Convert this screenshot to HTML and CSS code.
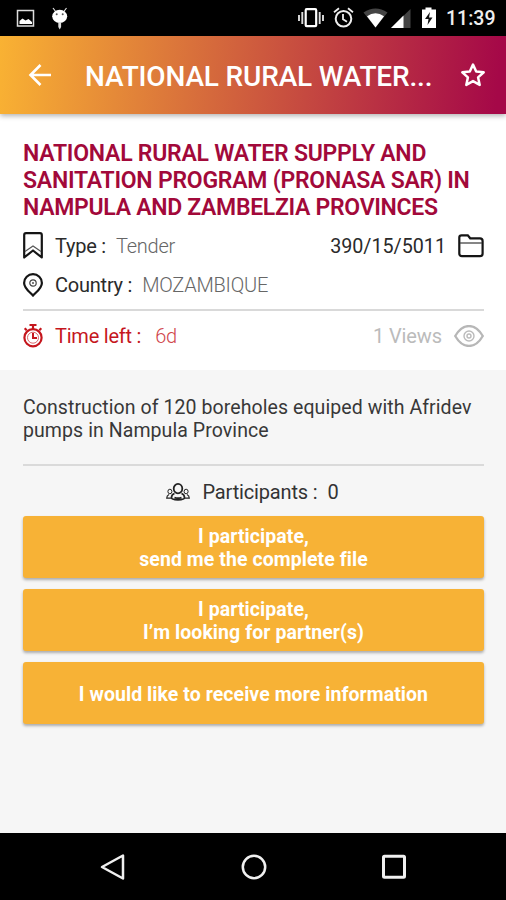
FILE: index.html
```html
<!DOCTYPE html>
<html lang="en">
<head>
<meta charset="utf-8">
<title>National Rural Water Supply</title>
<link rel="stylesheet" href="styles.css">
</head>
<body>
<div class="screen">
  <div class="status">
    <svg class="status-left" width="80" height="36" viewBox="0 0 80 36">
      <path d="M17.5 10.5h16v15.500h-16z" fill="none" stroke="#ddd" stroke-width="1.500"/>
      <path d="M19.500 24v-3l3-2.500 3 2 3-1.500 3.500 3v2z" fill="#fff"/>
      <path d="M53 8l3 4M66.500 8l-3 4" stroke="#ddd" stroke-width="1.200"/>
      <ellipse cx="59.700" cy="16.300" rx="7.500" ry="6.600" fill="#fff"/>
      <path d="M58.300 22h2.800v5l-1.400 2.500-1.400-2.500z" fill="#ddd"/>
      <circle cx="56.700" cy="14.300" r="1" fill="#555"/><circle cx="62.700" cy="14.300" r="1" fill="#555"/>
    </svg>
    <svg class="status-right" width="150" height="36" viewBox="294 0 150 36">
      <rect x="305.700" y="9.200" width="10.500" height="17" rx="1" fill="none" stroke="#fff" stroke-width="2.200"/>
      <path d="M302.300 12v12M319.700 12v12" stroke="#ddd" stroke-width="1.900"/>
      <path d="M299 15v6M323 15v6" stroke="#ddd" stroke-width="1.900"/>
      <circle cx="343.500" cy="18.700" r="7.800" fill="none" stroke="#eee" stroke-width="2"/>
      <path d="M343 14v5.200l4 2.500M334 12.300l5-4M353 12.300l-5-4" fill="none" stroke="#eee" stroke-width="1.800"/>
      <path d="M363.500 12.500q12-8 24 0L375.500 27.500z" fill="#444"/>
      <path d="M367 16.300q8.500-6 17 0L375.500 27.500z" fill="#fff"/>
      <path d="M391 28l19.500-19v19z" fill="#444"/>
      <path d="M391 28l12.500-12.500V28z" fill="#fff"/>
      <path d="M422 9.500h3.500v-2h6v2h4.500v18.500h-14z" fill="#fff"/>
      <path d="M430 12l-5 7h3.500l-1 6 5-7.500h-3.500z" fill="#111"/>
    </svg>
    <span class="clock">11:39</span>
  </div>

  <header class="appbar">
    <svg class="back" width="26" height="26" viewBox="0 0 26 26"><path d="M24 13H4M13.500 3L3.500 13l10 10" fill="none" stroke="#fff" stroke-width="2.600"/></svg>
    <h1 class="appbar-title">NATIONAL RURAL WATER...</h1>
    <svg class="star" width="26" height="26" viewBox="0 0 26 26"><path d="M13 2.600l3.200 6.900 7.500.800-5.600 5.100 1.600 7.500L13 19.100l-6.700 3.800 1.600-7.500-5.600-5.100 7.500-.800z" fill="none" stroke="#fff" stroke-width="2.500" stroke-linejoin="round"/></svg>
  </header>

  <section class="summary">
    <h2 class="title"><span>NATIONAL RURAL WATER SUPPLY AND</span><br><span>SANITATION PROGRAM (PRONASA SAR) IN</span><br><span class="t3">NAMPULA AND ZAMBELZIA PROVINCES</span></h2>
    <div class="row row-type">
      <svg class="ico" width="20" height="28" viewBox="0 0 20 28"><path d="M1.200 25.500V3Q1.200 1.200 3 1.200h14Q18.800 1.200 18.800 3v22.500L10 18.500z" fill="none" stroke="#151515" stroke-width="2.200" stroke-linejoin="round"/><path d="M2 19.500l8-5.500 8 5.500" fill="none" stroke="#555" stroke-width="1.200"/></svg>
      <span class="label">Type :</span><span class="value">Tender</span>
      <span class="ref">390/15/5011</span>
      <svg class="folder" width="26" height="24" viewBox="0 0 26 24"><path d="M1.300 19.500V3.500Q1.300 1.300 3.500 1.300h6.300l2.400 3h9.800q2.600 0 2.600 2.600v12.600q0 2.600-2.600 2.600H4q-2.700 0-2.700-2.600z" fill="none" stroke="#151515" stroke-width="2.200"/><path d="M2 9h22" stroke="#444" stroke-width="1.300"/></svg>
    </div>
    <div class="row row-country">
      <svg class="ico" width="20" height="24" viewBox="0 0 20 24"><path d="M10 22.500C7.500 19.500 1.100 15.500 1.100 9.900a8.900 8.700 0 0 1 17.800 0C18.900 15.500 12.500 19.500 10 22.500z" fill="none" stroke="#151515" stroke-width="2.200"/><circle cx="10" cy="10" r="3.200" fill="none" stroke="#444" stroke-width="1.200"/><circle cx="10" cy="10" r="1" fill="#555"/></svg>
      <span class="label">Country :</span><span class="value">MOZAMBIQUE</span>
    </div>
    <div class="row row-time">
      <svg class="ico" width="20" height="24" viewBox="0 0 20 24"><path d="M6.500 1h7M10 1v4M16.300 6.300l2-2M3.700 6.300l-2-2" stroke="#c5161d" stroke-width="2.200"/><circle cx="10" cy="13.700" r="8.600" fill="none" stroke="#c5161d" stroke-width="2.200"/><circle cx="10" cy="13.700" r="5.500" fill="none" stroke="#d9686c" stroke-width="1"/><path d="M10 9v5h4" fill="none" stroke="#c5161d" stroke-width="2"/></svg>
      <span class="label">Time left :</span><span class="value v-time">6d</span>
      <span class="views">1 Views</span>
      <svg class="eye" width="30" height="22" viewBox="0 0 30 22"><path d="M1.200 11C9-2.300 21-2.300 28.800 11C21 24.300 9 24.300 1.200 11z" fill="none" stroke="#b7b7b7" stroke-width="2.300"/><circle cx="15" cy="11" r="5" fill="none" stroke="#bbb" stroke-width="1.400"/><circle cx="15" cy="11" r="2" fill="none" stroke="#bbb" stroke-width="1.400"/></svg>
    </div>
  </section>

  <main class="detail">
    <p class="desc"><span>Construction of 120 boreholes equiped with Afridev</span><br><span>pumps in Nampula Province</span></p>
    <div class="participants">
      <svg width="24" height="18" viewBox="0 0 24 18" fill="none" stroke="#222"><ellipse cx="12" cy="5.600" rx="4.300" ry="4.700" stroke-width="1.800"/><path d="M8.500 10.500Q5.500 11.500 5.500 14.500q0 2.300 6.500 2.300t6.500-2.300q0-3-3-4M8.500 14.500q3.500 1.200 7 0" stroke-width="1.700"/><ellipse cx="3.900" cy="8.500" rx="2" ry="2.300" stroke-width="1"/><ellipse cx="20.100" cy="8.500" rx="2" ry="2.300" stroke-width="1"/><path d="M3 11.500q-2.300 1-2.300 3.700H5M21 11.500q2.300 1 2.300 3.700H19" stroke-width="1.200"/></svg>
      <span class="p-label">Participants :</span><span class="p-count">0</span>
    </div>
    <div class="actions">
      <button class="btn"><span>I participate,</span><span>send me the complete file</span></button>
      <button class="btn"><span>I participate,</span><span>I’m looking for partner(s)</span></button>
      <button class="btn"><span>I would like to receive more information</span></button>
    </div>
  </main>

  <nav class="navbar">
    <svg width="28" height="28" viewBox="0 0 28 28"><path d="M24 2.500v23L3 14z" fill="none" stroke="#f0f0f0" stroke-width="2.500" stroke-linejoin="round"/></svg>
    <svg width="28" height="28" viewBox="0 0 28 28"><circle cx="14" cy="14" r="11.200" fill="none" stroke="#f0f0f0" stroke-width="2.500"/></svg>
    <svg width="28" height="28" viewBox="0 0 28 28"><rect x="3.500" y="3.200" width="21" height="21" rx="1" fill="none" stroke="#f0f0f0" stroke-width="3"/></svg>
  </nav>
</div>
</body>
</html>
```
FILE: styles.css
```css
* { box-sizing: border-box; margin: 0; padding: 0; }
body { font-family: Roboto, "Liberation Sans", sans-serif; background: #f6f6f6; }
svg { display: block; flex: none; }
span { white-space: nowrap; }
.screen { width: 506px; height: 900px; display: flex; flex-direction: column; overflow: hidden; }

.status { height: 36px; flex: none; background: #000; display: flex; }
.status-right { margin-left: 214px; }
.clock { margin-left: 2px; line-height: 38px; font-size: 19.5px; font-weight: 500; color: #eee; }

.appbar { height: 78px; flex: none; display: flex; align-items: center; padding: 0 20px 0 27px; background: linear-gradient(95deg, #f9b233 0%, #a50848 98%); box-shadow: 0 2px 5px rgba(0,0,0,.3); position: relative; }
.appbar-title { margin-left: 32px; flex: 1; color: #fff; font-size: 28px; line-height: 36px; font-weight: 500; letter-spacing: -.16px; white-space: nowrap; padding-top: 3px; }

.summary { height: 256px; flex: none; background: #fff; padding: 26px 22px 0 23px; }
.title { font-size: 23px; line-height: 27px; font-weight: 600; letter-spacing: -.24px; color: #a2093a; height: 81px; }
.title .t3 { letter-spacing: -.3px; }
.row { display: flex; align-items: center; font-size: 20px; letter-spacing: -.23px; color: #2a2a2a; }
.row-type { height: 38px; margin-top: 6px; }
.row-country { height: 39px; padding-top: 1px; }
.row-time { height: 51px; margin-top: 5px; border-top: 2px solid #d9d9d9; color: #c5161d; }
.label { margin-left: 12px; }
.value { margin-left: 10px; color: #666; font-weight: 300; }
.ref { margin-left: auto; font-size: 19.7px; letter-spacing: 0; }
.folder { margin-left: 12px; }
.v-time { margin-left: 14px; color: #d0454b; }
.views { margin-left: auto; color: #bbb; letter-spacing: -.1px; }
.eye { margin-left: 12px; }

.detail { flex: 1; background: #f6f6f6; padding: 26px 22px 0 23px; }
.desc { height: 70px; font-size: 19.500px; line-height: 23px; letter-spacing: .08px; color: #383838; border-bottom: 2px solid #dadada; }
.participants { height: 50px; display: flex; align-items: center; justify-content: center; padding-right: 2px; padding-top: 2px; font-size: 20px; letter-spacing: -.16px; color: #333; }
.p-label { margin-left: 12px; }
.p-count { margin-left: 10px; }
.actions { display: flex; flex-direction: column; gap: 11px; }
.btn { height: 62px; border: 0; border-radius: 3px; background: #f7b236; color: #fff; font: 700 19.500px/23px Roboto, sans-serif; letter-spacing: .06px; display: flex; flex-direction: column; align-items: center; justify-content: center; padding-top: 2px; box-shadow: 0 2px 3px rgba(0,0,0,.3); }

.navbar { height: 67px; flex: none; background: #000; display: flex; justify-content: center; align-items: center; gap: 112.5px; padding-left: 1px; }
```
